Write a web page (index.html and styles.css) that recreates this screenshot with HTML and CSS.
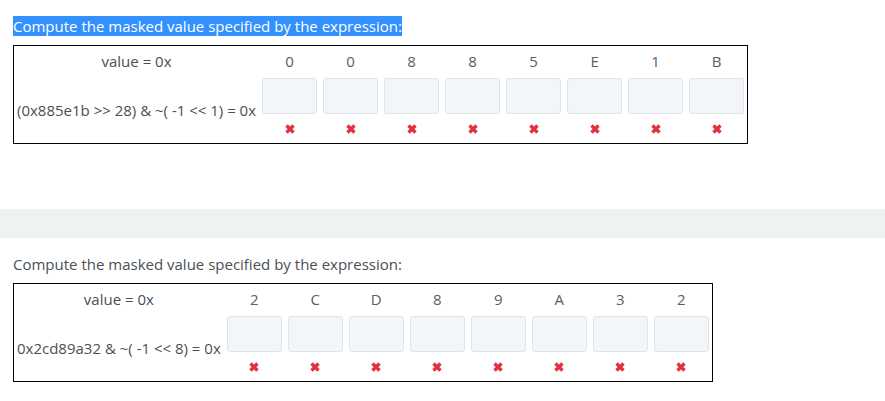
FILE: index.html
```html
<!DOCTYPE html>
<html lang="en">
<head>
  <meta charset="UTF-8">
  <meta name="viewport" content="width=device-width, initial-scale=1.0">
  <title>Masked Value</title>
  <link rel="stylesheet" href="styles.css">
</head>
<body>
  <div class="question">
    <p class="prompt"><span class="picked">Compute the masked value specified by the expression:</span></p>
    <table class="mask">
      <tr>
        <td class="label">value = 0x</td>
        <td class="digit">0</td>
        <td class="digit">0</td>
        <td class="digit">8</td>
        <td class="digit">8</td>
        <td class="digit">5</td>
        <td class="digit">E</td>
        <td class="digit">1</td>
        <td class="digit">B</td>
      </tr>
      <tr>
        <td class="label">(0x885e1b &gt;&gt; 28) &amp; ~( -1 &lt;&lt; 1) = 0x</td>
        <td class="cell"><input class="nibble" type="text"><span class="wrong"><svg viewBox="0 0 12 12" width="12" height="12"><path d="M2.5 2.5 L9.5 9.5 M9.5 2.5 L2.5 9.5"/></svg></span></td>
        <td class="cell"><input class="nibble" type="text"><span class="wrong"><svg viewBox="0 0 12 12" width="12" height="12"><path d="M2.5 2.5 L9.5 9.5 M9.5 2.5 L2.5 9.5"/></svg></span></td>
        <td class="cell"><input class="nibble" type="text"><span class="wrong"><svg viewBox="0 0 12 12" width="12" height="12"><path d="M2.5 2.5 L9.5 9.5 M9.5 2.5 L2.5 9.5"/></svg></span></td>
        <td class="cell"><input class="nibble" type="text"><span class="wrong"><svg viewBox="0 0 12 12" width="12" height="12"><path d="M2.5 2.5 L9.5 9.5 M9.5 2.5 L2.5 9.5"/></svg></span></td>
        <td class="cell"><input class="nibble" type="text"><span class="wrong"><svg viewBox="0 0 12 12" width="12" height="12"><path d="M2.5 2.5 L9.5 9.5 M9.5 2.5 L2.5 9.5"/></svg></span></td>
        <td class="cell"><input class="nibble" type="text"><span class="wrong"><svg viewBox="0 0 12 12" width="12" height="12"><path d="M2.5 2.5 L9.5 9.5 M9.5 2.5 L2.5 9.5"/></svg></span></td>
        <td class="cell"><input class="nibble" type="text"><span class="wrong"><svg viewBox="0 0 12 12" width="12" height="12"><path d="M2.5 2.5 L9.5 9.5 M9.5 2.5 L2.5 9.5"/></svg></span></td>
        <td class="cell"><input class="nibble" type="text"><span class="wrong"><svg viewBox="0 0 12 12" width="12" height="12"><path d="M2.5 2.5 L9.5 9.5 M9.5 2.5 L2.5 9.5"/></svg></span></td>
      </tr>
    </table>
  </div>

  <div class="band"></div>

  <div class="question second">
    <p class="prompt">Compute the masked value specified by the expression:</p>
    <table class="mask">
      <tr>
        <td class="label">value = 0x</td>
        <td class="digit">2</td>
        <td class="digit">C</td>
        <td class="digit">D</td>
        <td class="digit">8</td>
        <td class="digit">9</td>
        <td class="digit">A</td>
        <td class="digit">3</td>
        <td class="digit">2</td>
      </tr>
      <tr>
        <td class="label">0x2cd89a32 &amp; ~( -1 &lt;&lt; 8) = 0x</td>
        <td class="cell"><input class="nibble" type="text"><span class="wrong"><svg viewBox="0 0 12 12" width="12" height="12"><path d="M2.5 2.5 L9.5 9.5 M9.5 2.5 L2.5 9.5"/></svg></span></td>
        <td class="cell"><input class="nibble" type="text"><span class="wrong"><svg viewBox="0 0 12 12" width="12" height="12"><path d="M2.5 2.5 L9.5 9.5 M9.5 2.5 L2.5 9.5"/></svg></span></td>
        <td class="cell"><input class="nibble" type="text"><span class="wrong"><svg viewBox="0 0 12 12" width="12" height="12"><path d="M2.5 2.5 L9.5 9.5 M9.5 2.5 L2.5 9.5"/></svg></span></td>
        <td class="cell"><input class="nibble" type="text"><span class="wrong"><svg viewBox="0 0 12 12" width="12" height="12"><path d="M2.5 2.5 L9.5 9.5 M9.5 2.5 L2.5 9.5"/></svg></span></td>
        <td class="cell"><input class="nibble" type="text"><span class="wrong"><svg viewBox="0 0 12 12" width="12" height="12"><path d="M2.5 2.5 L9.5 9.5 M9.5 2.5 L2.5 9.5"/></svg></span></td>
        <td class="cell"><input class="nibble" type="text"><span class="wrong"><svg viewBox="0 0 12 12" width="12" height="12"><path d="M2.5 2.5 L9.5 9.5 M9.5 2.5 L2.5 9.5"/></svg></span></td>
        <td class="cell"><input class="nibble" type="text"><span class="wrong"><svg viewBox="0 0 12 12" width="12" height="12"><path d="M2.5 2.5 L9.5 9.5 M9.5 2.5 L2.5 9.5"/></svg></span></td>
        <td class="cell"><input class="nibble" type="text"><span class="wrong"><svg viewBox="0 0 12 12" width="12" height="12"><path d="M2.5 2.5 L9.5 9.5 M9.5 2.5 L2.5 9.5"/></svg></span></td>
      </tr>
    </table>
  </div>
</body>
</html>
```

FILE: styles.css
```css
body{
  margin: 0;
  background-color: white;
  color: #4a5056;
  font-family: "Open Sans", Arial, sans-serif;
  font-size: 15px;
}
.question{
  padding: 16px 13px 0;
}
.question.second{
  padding-top: 16px;
}
.prompt{
  margin: 0 0 9px;
  line-height: 20px;
}
.picked{
  background-color: #3390ff;
  color: white;
}
.mask{
  border-collapse: collapse;
  border: 1.5px solid black;
}
.mask td{
  padding: 0 3px;
}
.label{
  text-align: center;
  white-space: nowrap;
  vertical-align: middle;
}
.digit{
  height: 30px;
  text-align: center;
  color: #585e64;
}
.mask td.cell{
  padding-top: 2px;
  text-align: center;
}
.nibble{
  display: block;
  box-sizing: border-box;
  width: 55px;
  height: 36px;
  margin: 0;
  border: 1px solid #dfe4e8;
  border-radius: 3px;
  background-color: #f3f6f9;
}
.wrong{
  display: block;
  height: 29px;
  padding-top: 9px;
  box-sizing: border-box;
}
.wrong svg{
  display: block;
  margin: 0 auto;
  stroke: #e3323f;
  stroke-width: 3.4;
  fill: none;
}
.band{
  margin-top: 65px;
  height: 29px;
  background-color: #eff2f3;
}
```
